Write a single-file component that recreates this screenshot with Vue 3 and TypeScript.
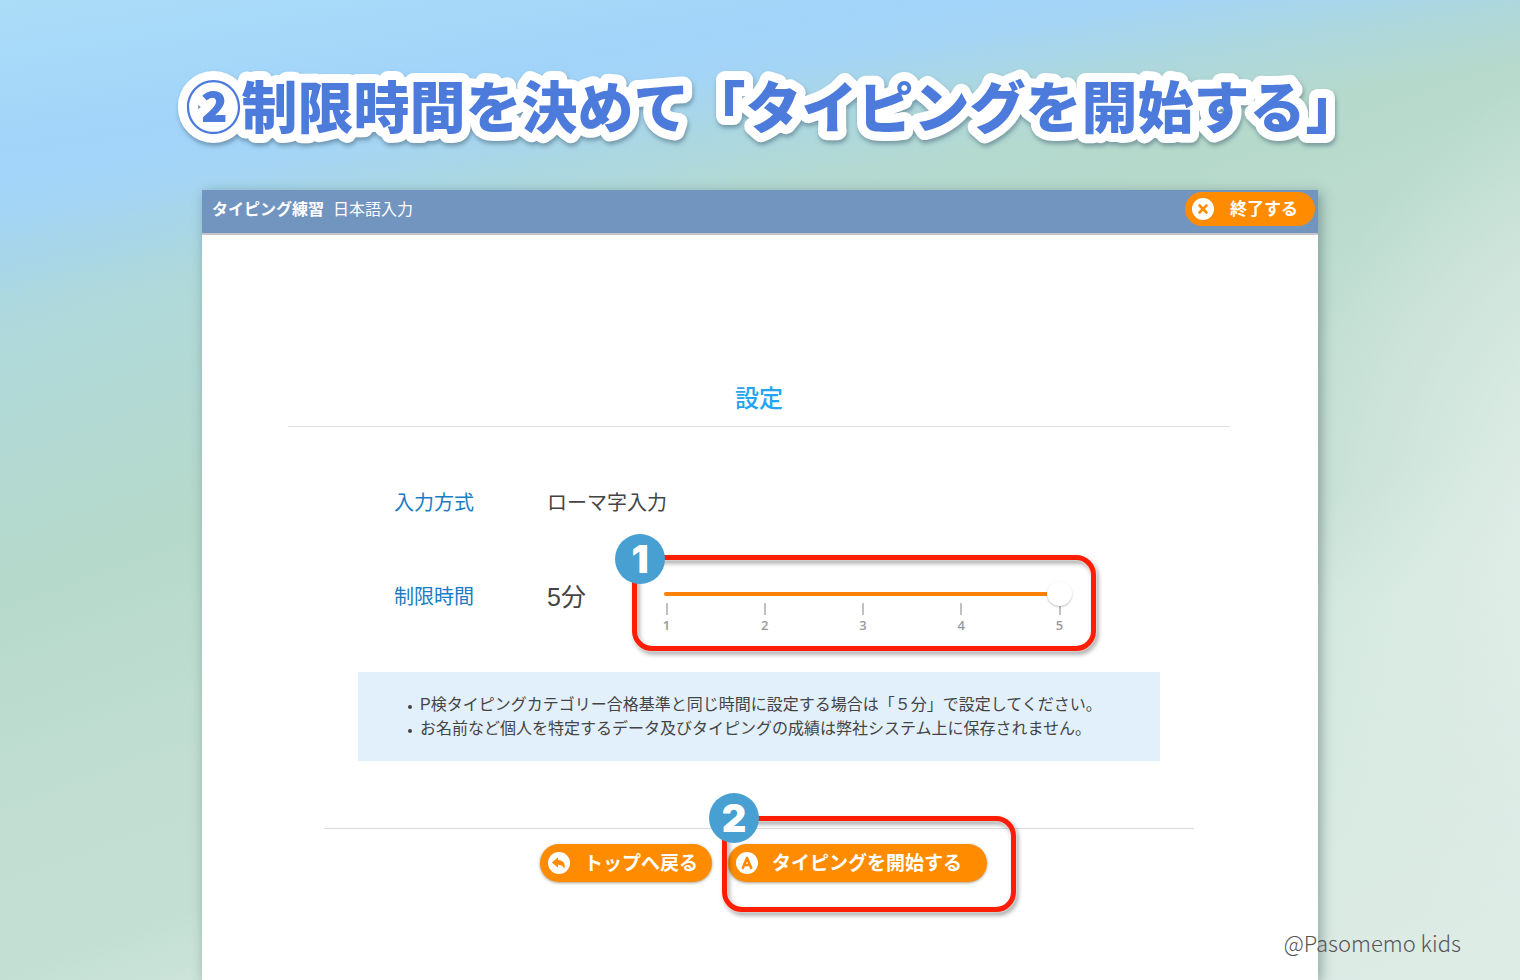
<script setup lang="ts">
import { computed, ref } from 'vue'

const min = 1
const max = 5
const minutes = ref<number>(5)
const marks: number[] = [1, 2, 3, 4, 5]
const filled = computed(() => `${((minutes.value - min) / (max - min)) * 100}%`)

const notes: string[] = [
  'P検タイピングカテゴリー合格基準と同じ時間に設定する場合は「５分」で設定してください。',
  'お名前など個人を特定するデータ及びタイピングの成績は弊社システム上に保存されません。',
]
</script>

<template>
  <div class="page">
    <h1 class="title">
      <svg class="title-art">
        <text x="50%" y="64" text-anchor="middle">②制限時間を決めて「タイピングを開始する」</text>
      </svg>
    </h1>

    <main class="card">
      <header class="bar">
        <div class="bar-text">
          <strong>タイピング練習</strong>
          <span>日本語入力</span>
        </div>
        <button type="button" class="pill pill-small">
          <svg class="icon" viewBox="0 0 22 22" aria-hidden="true">
            <circle cx="11" cy="11" r="11" fill="#fff" />
            <path d="M7.5 7.5l7 7M14.5 7.5l-7 7" stroke="#ff8c00" stroke-width="2.6" stroke-linecap="round" />
          </svg>
          <span>終了する</span>
        </button>
      </header>

      <section class="settings">
        <h2>設定</h2>

        <div class="form">
          <div class="row">
            <span class="label">入力方式</span>
            <span class="value">ローマ字入力</span>
          </div>
          <div class="row row-limit">
            <label class="label" for="limit">制限時間</label>
            <output class="value" for="limit">{{ minutes }}分</output>
            <div class="callout">
              <span class="badge">1</span>
              <div class="slider">
                <span class="track"><span class="fill" :style="{ width: filled }"></span></span>
                <div class="marks" aria-hidden="true">
                  <span v-for="m in marks" :key="m" class="mark">{{ m }}</span>
                </div>
                <input id="limit" v-model.number="minutes" type="range" :min="min" :max="max" step="1" />
              </div>
            </div>
          </div>
        </div>

        <ul class="notes">
          <li v-for="n in notes" :key="n">{{ n }}</li>
        </ul>

        <div class="actions">
          <button type="button" class="pill">
            <svg class="icon" viewBox="0 0 22 22" aria-hidden="true">
              <circle cx="11" cy="11" r="11" fill="#fff" />
              <path d="M3.8 10.4L10 5.200v2.800c5 .4 8 3.200 6.200 9C15.200 14.200 13.400 12.800 10 12.800v3z" fill="#ff8c00" />
            </svg>
            <span>トップへ戻る</span>
          </button>
          <div class="start">
            <button type="button" class="pill pill-wide">
              <svg class="icon" viewBox="0 0 22 22" aria-hidden="true">
                <circle cx="11" cy="11" r="11" fill="#fff" />
                <path d="M6.8 16L11 6l4.200 10M8.400 13h5.200" fill="none" stroke="#ff8c00" stroke-width="2.6" stroke-linecap="round" stroke-linejoin="round" />
              </svg>
              <span>タイピングを開始する</span>
            </button>
            <div class="frame"><span class="badge">2</span></div>
          </div>
        </div>
      </section>
    </main>

    <p class="credit">@Pasomemo kids</p>
  </div>
</template>

<style>
body {
  margin: 0;
}
</style>

<style scoped>
.page {
  position: relative;
  box-sizing: border-box;
  min-height: 100vh;
  padding: 64px 202px 0;
  display: flex;
  flex-direction: column;
  overflow: hidden;
  font-family: "Liberation Sans", "Noto Sans CJK JP", sans-serif;
  color: #444;
  background:
    radial-gradient(ellipse 380px 500px at 109% 56%, #dfede7 30%, rgba(223, 237, 231, 0) 100%),
    linear-gradient(171deg, #abddf8 0%, #a2d4fa 12%, rgba(162, 212, 250, 0.9) 15%, rgba(162, 212, 248, 0.35) 20%, rgba(162, 212, 248, 0) 25%),
    linear-gradient(160deg, #a4d5f3 0%, #a5d6ee 13%, #aed8dc 21%, #b2d9d3 29%, #b5d9cb 38%, #c2ded3 54%, #c3dfd4 64%, #d3e8df 72%, #deece6 100%);
}

.title {
  margin: 0 0 46px 27px;
}

.title-art {
  display: block;
  width: 100%;
  height: 80px;
  overflow: visible;
  font-family: "Noto Sans CJK JP", sans-serif;
  font-size: 56px;
  font-weight: 900;
  fill: #4c7bdc;
  stroke: #fff;
  stroke-width: 18px;
  stroke-linejoin: round;
  paint-order: stroke;
  filter: drop-shadow(1px 3px 2px rgba(60, 90, 110, 0.5));
}

.card {
  flex: 1;
  background: #fff;
  box-shadow: 3px 3px 12px rgba(50, 80, 80, 0.45);
}

.bar {
  display: flex;
  align-items: flex-start;
  justify-content: space-between;
  box-sizing: border-box;
  height: 45px;
  padding: 2px 3px 0 10px;
  border-bottom: 2px solid #c4c4c8;
  background: #7295bf;
}

.bar-text {
  display: flex;
  gap: 9px;
  font-size: 16px;
  line-height: 36px;
  color: #fff;
}

.pill {
  display: flex;
  align-items: center;
  gap: 14px;
  height: 38px;
  padding: 0 14px 0 8px;
  border: 0;
  border-radius: 19px;
  background: #ff8c00;
  box-shadow: 0 1px 3px rgba(80, 60, 20, 0.5);
  color: #fff;
  font-family: inherit;
  font-size: 19px;
  font-weight: 700;
  line-height: 32px;
  white-space: nowrap;
}

.pill span {
  padding-top: 2px;
}

.pill-wide {
  padding-right: 25px;
}

.pill-small {
  height: 34px;
  gap: 16px;
  padding: 0 17px 0 7px;
  box-shadow: none;
  font-size: 17px;
}

.icon {
  flex: none;
  width: 22px;
  height: 22px;
}

.settings {
  padding: 144px 88px 0 86px;
}

h2 {
  margin: 0;
  padding-bottom: 7px;
  border-bottom: 1px solid #e0e0e0;
  font-size: 24px;
  font-weight: 500;
  line-height: 40px;
  text-align: center;
  color: #24a5f2;
}

.form {
  display: grid;
  gap: 28px;
  padding: 52px 0 0 106px;
}

.row {
  display: grid;
  grid-template-columns: 153px 85px 464px;
  align-items: start;
}

.label {
  font-size: 20px;
  line-height: 48px;
  color: #1a7cc4;
}

.value {
  font-size: 20px;
  line-height: 48px;
  white-space: nowrap;
}

.row-limit .label,
.row-limit .value {
  padding-top: 18px;
}

.row-limit .value {
  font-size: 25px;
}

.callout {
  position: relative;
  box-sizing: border-box;
  height: 96px;
  padding: 26px 24px 0 22px;
}

.callout::before,
.frame::before {
  content: "";
  position: absolute;
  inset: 0;
  border: 5px solid #ff1d05;
  border-radius: 20px;
  filter: drop-shadow(0 0 1px #fff) drop-shadow(2px 3px 2px rgba(0, 0, 0, 0.35));
  pointer-events: none;
}

.badge {
  position: absolute;
  top: -21px;
  left: -17px;
  width: 50px;
  height: 50px;
  border-radius: 50%;
  background: #489fd1;
  color: #fff;
  font-family: Inter, sans-serif;
  font-size: 38px;
  font-weight: 900;
  line-height: 50px;
  text-align: center;
}

.slider {
  display: grid;
  position: relative;
}

.track,
.slider input {
  grid-area: 1 / 1;
}

.track {
  align-self: center;
  height: 4px;
  margin: 0 12px 0 10px;
  border-radius: 2px;
  background: #ddd;
}

.fill {
  display: block;
  height: 4px;
  border-radius: 2px;
  background: #fb8207;
}

.slider input {
  appearance: none;
  width: 100%;
  height: 25px;
  margin: 0;
  background: transparent;
}

.slider input::-webkit-slider-thumb {
  appearance: none;
  width: 25px;
  height: 25px;
  border-radius: 50%;
  background: #fff;
  box-shadow: 0 1px 2px rgba(0, 0, 0, 0.25);
}

.marks {
  grid-area: 2 / 1;
  display: flex;
  justify-content: space-between;
  margin-top: -3px;
}

.mark {
  display: flex;
  flex-direction: column;
  align-items: center;
  width: 25px;
  font-family: "Open Sans", sans-serif;
  font-size: 13px;
  font-weight: 600;
  line-height: 20px;
  color: #999;
}

.mark::before {
  content: "";
  width: 2px;
  height: 12px;
  background: #c0c0c0;
}

.notes {
  margin: 21px 70px 0;
  padding: 21px 0 20px 62px;
  background: #e2f0fb;
  font-size: 16px;
  line-height: 24px;
  list-style: none;
  white-space: nowrap;
}

.notes li {
  display: flex;
  align-items: center;
}

.notes li::before {
  content: "";
  flex: none;
  width: 4px;
  height: 4px;
  margin: 4px 8px 0 -12px;
  border-radius: 50%;
  background: #444;
}

.actions {
  display: flex;
  justify-content: center;
  gap: 16px;
  margin: 67px 36px 0;
  padding: 15px 0 40px 9px;
  border-top: 1px solid #ddd;
}

.start {
  position: relative;
}

.frame {
  position: absolute;
  inset: -28px -29px -30px -6px;
  pointer-events: none;
}

.frame .badge {
  top: -23px;
  left: -13px;
}

.credit {
  position: absolute;
  right: 59px;
  bottom: 22px;
  margin: 0;
  font-family: "Noto Sans CJK JP", sans-serif;
  font-size: 22px;
  font-weight: 300;
  line-height: 32px;
  color: #555;
}
</style>
